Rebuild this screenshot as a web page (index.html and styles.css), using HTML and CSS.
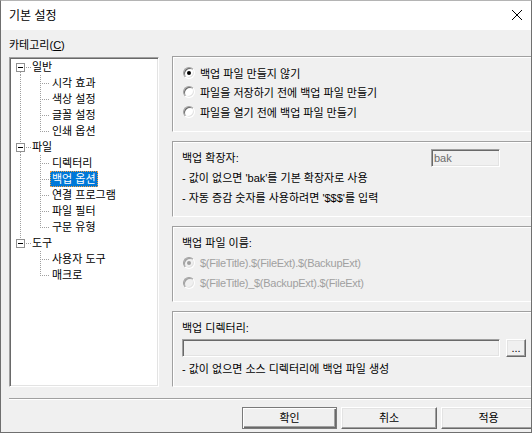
FILE: index.html
```html
<!DOCTYPE html>
<html lang="ko">
<head>
<meta charset="utf-8">
<title>기본 설정</title>
<link rel="stylesheet" href="styles.css">
</head>
<body>
<div class="win">
  <div class="titlebar">
    <span class="title">기본 설정</span>
    <svg class="close" width="10" height="10" viewBox="0 0 10 10"><path d="M0 0L10 10M10 0L0 10" stroke="#000" stroke-width="1"/></svg>
  </div>
  <div class="content">
    <div class="cat-label">카테고리(<u>C</u>)</div>
    <div class="main">
      <div class="tree">
        <div class="r">
          <svg class="g" width="20" height="16" viewBox="0 0 20 16"><path d="M9.5 13V16" stroke="#a0a0a0" stroke-dasharray="1 1"/><rect x="5.5" y="4.5" width="8" height="8" fill="#fff" stroke="#919191"/><path d="M7 8.5H12" stroke="#000"/><path d="M15 8.5H20" stroke="#a0a0a0" stroke-dasharray="1 1"/></svg>
          <span class="t">일반</span>
        </div>
        <div class="r"><span class="g v"></span><span class="g tee"></span><span class="t">시각 효과</span></div>
        <div class="r"><span class="g v"></span><span class="g tee"></span><span class="t">색상 설정</span></div>
        <div class="r"><span class="g v"></span><span class="g tee"></span><span class="t">글꼴 설정</span></div>
        <div class="r"><span class="g v"></span><span class="g end"></span><span class="t">인쇄 옵션</span></div>
        <div class="r">
          <svg class="g" width="20" height="16" viewBox="0 0 20 16"><path d="M9.5 0V4M9.5 13V16" stroke="#a0a0a0" stroke-dasharray="1 1"/><rect x="5.5" y="4.5" width="8" height="8" fill="#fff" stroke="#919191"/><path d="M7 8.5H12" stroke="#000"/><path d="M15 8.5H20" stroke="#a0a0a0" stroke-dasharray="1 1"/></svg>
          <span class="t">파일</span>
        </div>
        <div class="r"><span class="g v"></span><span class="g tee"></span><span class="t">디렉터리</span></div>
        <div class="r"><span class="g v"></span><span class="g tee"></span><span class="t sel">백업 옵션</span></div>
        <div class="r"><span class="g v"></span><span class="g tee"></span><span class="t">연결 프로그램</span></div>
        <div class="r"><span class="g v"></span><span class="g tee"></span><span class="t">파일 필터</span></div>
        <div class="r"><span class="g v"></span><span class="g end"></span><span class="t">구문 유형</span></div>
        <div class="r">
          <svg class="g" width="20" height="16" viewBox="0 0 20 16"><path d="M9.5 0V4" stroke="#a0a0a0" stroke-dasharray="1 1"/><rect x="5.5" y="4.5" width="8" height="8" fill="#fff" stroke="#919191"/><path d="M7 8.5H12" stroke="#000"/><path d="M15 8.5H20" stroke="#a0a0a0" stroke-dasharray="1 1"/></svg>
          <span class="t">도구</span>
        </div>
        <div class="r"><span class="g"></span><span class="g tee"></span><span class="t">사용자 도구</span></div>
        <div class="r"><span class="g"></span><span class="g end"></span><span class="t">매크로</span></div>
      </div>
      <div class="panel">
        <div class="group g1">
          <div class="opt"><span class="rb on"></span><span>백업 파일 만들지 않기</span></div>
          <div class="opt"><span class="rb"></span><span>파일을 저장하기 전에 백업 파일 만들기</span></div>
          <div class="opt"><span class="rb"></span><span>파일을 열기 전에 백업 파일 만들기</span></div>
        </div>
        <div class="group">
          <div class="line fixed"><span>백업 확장자:</span><span class="edit ext">bak</span></div>
          <div class="line">- 값이 없으면 'bak'를 기본 확장자로 사용</div>
          <div class="line">- 자동 증감 숫자를 사용하려면 '$$$'를 입력</div>
        </div>
        <div class="group">
          <div class="line">백업 파일 이름:</div>
          <div class="opt2 dis"><span class="rb on dis"></span><span class="lat">$(FileTitle).$(FileExt).$(BackupExt)</span></div>
          <div class="opt2 dis"><span class="rb dis"></span><span class="lat">$(FileTitle)_$(BackupExt).$(FileExt)</span></div>
        </div>
        <div class="group">
          <div class="line">백업 디렉터리:</div>
          <div class="dirrow"><span class="edit dir"></span><span class="mini">...</span></div>
          <div class="line note">- 값이 없으면 소스 디렉터리에 백업 파일 생성</div>
        </div>
      </div>
    </div>
    <div class="sep"></div>
    <div class="btns">
      <span class="btn def">확인</span>
      <span class="btn w96">취소</span>
      <span class="btn">적용</span>
    </div>
  </div>
</div>
</body>
</html>
```

FILE: styles.css
```css
* { box-sizing: border-box; }
html, body { margin: 0; padding: 0; }
body {
  width: 532px;
  height: 433px;
  overflow: hidden;
  background: #f0f0f0;
  font-family: "Liberation Sans", "Noto Sans CJK KR", sans-serif;
  font-size: 11px;
  color: #000;
}
.win {
  width: 532px;
  height: 433px;
  border: 1px solid #6f6f6f;
  border-top-color: #b4b4b4;
  background: #f0f0f0;
  overflow: hidden;
  display: flex;
  flex-direction: column;
}
.titlebar {
  flex: none;
  height: 29px;
  background: #fff;
  display: flex;
  align-items: center;
  justify-content: space-between;
  padding: 0 9px 1px 8px;
}
.title {
  font-family: "Noto Sans CJK KR", sans-serif;
  font-size: 12px;
  line-height: 16px;
}
.close { display: block; }
.content {
  flex: 1;
  padding: 7px 0 0 8px;
}
.cat-label {
  height: 16px;
  line-height: 16px;
}
.cat-label u { text-decoration-thickness: 1px; text-underline-offset: 1px; }
.main {
  display: flex;
  align-items: flex-start;
  margin-top: 4px;
}
.tree {
  flex: none;
  width: 150px;
  height: 330px;
  background: #fff;
  border: 1px solid;
  border-color: #a0a0a0 #fff #fff #a0a0a0;
  box-shadow: inset 1px 1px #696969, inset -1px -1px #e3e3e3;
  padding: 1px;
}
.r {
  display: flex;
  align-items: center;
  height: 16px;
}
.g {
  display: block;
  flex: none;
  width: 20px;
  height: 16px;
}
.g.v {
  background: repeating-linear-gradient(to bottom, #a0a0a0 0 1px, transparent 1px 2px) 9px 0 / 1px 16px no-repeat;
}
.g.tee {
  background:
    repeating-linear-gradient(to bottom, #a0a0a0 0 1px, transparent 1px 2px) 9px 0 / 1px 16px no-repeat,
    repeating-linear-gradient(to right, #a0a0a0 0 1px, transparent 1px 2px) 11px 8px / 8px 1px no-repeat;
}
.g.end {
  background:
    repeating-linear-gradient(to bottom, #a0a0a0 0 1px, transparent 1px 2px) 9px 0 / 1px 9px no-repeat,
    repeating-linear-gradient(to right, #a0a0a0 0 1px, transparent 1px 2px) 11px 8px / 8px 1px no-repeat;
}
.t {
  margin-left: -1px;
  padding: 0 2px;
  line-height: 16px;
  height: 16px;
  white-space: nowrap;
}
.t.sel {
  background: #0078d7;
  color: #fff;
  outline: 1px dotted #f8a040;
  outline-offset: -1px;
}
.panel {
  flex: 1;
  margin: -1px -30px 0 13px;
  display: flex;
  flex-direction: column;
  gap: 9px;
}
.group {
  height: 76px;
  border: 1px solid #a0a0a0;
  border-bottom-color: #fff;
  box-shadow: inset 1px 1px #fff;
  padding: 6px 0 0 9px;
}
.opt, .opt2 {
  display: flex;
  align-items: center;
  white-space: nowrap;
}
.opt { height: 19.5px; }
.opt2 { height: 20px; }
.lat { letter-spacing: -0.28px; }
.dis { color: #a0a0a0; }
.rb {
  flex: none;
  width: 12px;
  height: 12px;
  margin: 0 5px 0 1px;
  border-radius: 50%;
  border: 1px solid;
  border-color: #a0a0a0 #fff #fff #a0a0a0;
  background: #fff;
  box-shadow: inset 1px 1px #696969, inset -1px -1px #e3e3e3;
  display: flex;
  align-items: center;
  justify-content: center;
}
.rb.on::after {
  content: "";
  width: 4px;
  height: 4px;
  border-radius: 50%;
  background: #000;
}
.rb.dis {
  background: #f0f0f0;
  box-shadow: inset 1px 1px #a0a0a0, inset -1px -1px #e3e3e3;
}
.rb.on.dis::after { background: #a0a0a0; }
.line {
  height: 20px;
  line-height: 20px;
  white-space: nowrap;
}
.fixed {
  width: 318px;
  display: flex;
  align-items: center;
  justify-content: space-between;
}
.edit {
  display: block;
  height: 18px;
  border: 1px solid;
  border-color: #a0a0a0 #fff #fff #a0a0a0;
  box-shadow: inset 1px 1px #696969, inset -1px -1px #e3e3e3;
  background: #f0f0f0;
  padding: 0 2px;
  line-height: 16px;
}
.ext {
  width: 69px;
  color: #6d6d6d;
}
.dirrow {
  display: flex;
  margin-top: 1px;
  height: 18px;
}
.dir { width: 318px; }
.mini {
  display: block;
  width: 20px;
  height: 18px;
  margin-left: 6px;
  border: 1px solid;
  border-color: #fff #696969 #696969 #fff;
  box-shadow: inset -1px -1px #a0a0a0, inset 1px 1px #e3e3e3;
  text-align: center;
  line-height: 16px;
  font-size: 11px;
}
.note { margin-top: 2px; }
.sep {
  height: 2px;
  margin-top: 11px;
  border-top: 1px solid #a0a0a0;
  border-bottom: 1px solid #fff;
}
.btns {
  display: flex;
  gap: 4px;
  margin-top: 7px;
  padding-left: 233px;
}
.btn {
  display: block;
  flex: none;
  width: 95px;
  height: 22px;
  border: 1px solid;
  border-color: #fff #696969 #696969 #fff;
  box-shadow: inset -1px -1px #a0a0a0, inset 1px 1px #e3e3e3;
  background: #f0f0f0;
  text-align: center;
  line-height: 19px;
  font-family: "Noto Sans CJK KR", sans-serif;
  font-size: 11px;
}
.btn.w96 { width: 96px; }
.btn.def {
  border-color: #7a7a7a;
  box-shadow: inset 1px 1px #fff, inset -1px -1px #696969, inset -2px -2px #a0a0a0;
}
```
